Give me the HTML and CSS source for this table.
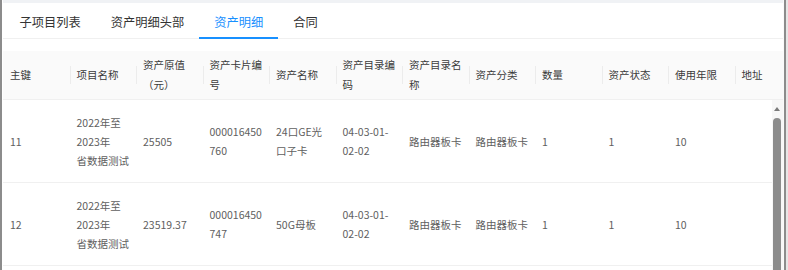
FILE: index.html
```
<!DOCTYPE html>
<html lang="zh-CN">
<head>
<meta charset="utf-8">
<link rel="stylesheet" href="styles.css">
</head>
<body>
<div class="frame">
  <div class="edge-left"></div>
  <div class="main">
    <div class="strip"></div>
    <div class="tabs">
      <div class="tab">子项目列表</div>
      <div class="tab">资产明细头部</div>
      <div class="tab active">资产明细</div>
      <div class="tab">合同</div>
    </div>
    <div class="grid">
      <div class="thead">
        <table>
          <colgroup>
            <col><col><col><col><col><col><col><col><col><col><col><col>
          </colgroup>
          <tr>
            <th>主键</th>
            <th>项目名称</th>
            <th>资产原值（元）</th>
            <th>资产卡片编号</th>
            <th>资产名称</th>
            <th>资产目录编码</th>
            <th>资产目录名称</th>
            <th>资产分类</th>
            <th>数量</th>
            <th>资产状态</th>
            <th>使用年限</th>
            <th>地址</th>
          </tr>
        </table>
      </div>
      <div class="tbody-wrap">
        <div class="tbody-clip">
          <table>
            <colgroup>
              <col><col><col><col><col><col><col><col><col><col><col><col>
            </colgroup>
            <tr>
              <td>11</td>
              <td>2022年至<br>2023年<br>省数据测试</td>
              <td>25505</td>
              <td class="brk">000016450760</td>
              <td>24口GE光口子卡</td>
              <td>04-03-01-02-02</td>
              <td>路由器板卡</td>
              <td>路由器板卡</td>
              <td>1</td>
              <td>1</td>
              <td>10</td>
              <td></td>
            </tr>
            <tr>
              <td>12</td>
              <td>2022年至<br>2023年<br>省数据测试</td>
              <td>23519.37</td>
              <td class="brk">000016450747</td>
              <td>50G母板</td>
              <td>04-03-01-02-02</td>
              <td>路由器板卡</td>
              <td>路由器板卡</td>
              <td>1</td>
              <td>1</td>
              <td>10</td>
              <td></td>
            </tr>
          </table>
        </div>
        <div class="scrollbar">
          <div class="sb-arrow"></div>
          <div class="sb-thumb"></div>
        </div>
      </div>
    </div>
  </div>
  <div class="edge-gap"></div>
  <div class="edge-right"></div>
  <div class="edge-far"></div>
</div>
</body>
</html>
```
FILE: styles.css
```
html, body {
  margin: 0;
  padding: 0;
  background: #fff;
}
body {
  width: 788px;
  height: 270px;
  overflow: hidden;
  font-family: "Noto Sans CJK SC", "Noto Sans", sans-serif;
}
.frame {
  display: flex;
  height: 270px;
}
.edge-left {
  width: 2px;
  background: #8c8c8c;
  margin-right: 1px;
  flex: none;
}
.main {
  width: 780px;
  flex: none;
  display: flex;
  flex-direction: column;
  overflow: hidden;
}
.edge-gap {
  width: 1px;
  background: #fafafa;
  flex: none;
}
.edge-right {
  width: 2px;
  background: #8c8c8c;
  flex: none;
}
.edge-far {
  width: 2px;
  background: #e6e6e6;
  flex: none;
}
.strip {
  height: 3px;
  background: #f0f2f5;
  flex: none;
}
.tabs {
  display: flex;
  height: 35px;
  border-bottom: 1px solid #f0f0f0;
  padding-left: 1.5px;
  flex: none;
}
.tab {
  position: relative;
  padding: 10px 15px 6px;
  font-size: 12.25px;
  line-height: 19px;
  color: #333;
  white-space: nowrap;
}
.tab.active {
  color: #1890ff;
}
.tab.active::after {
  content: "";
  position: absolute;
  left: 0;
  right: 0;
  bottom: -1px;
  height: 2px;
  background: #1890ff;
}
.grid {
  margin-top: 12px;
  flex: 1;
  display: flex;
  flex-direction: column;
  min-height: 0;
}
.thead {
  overflow: hidden;
  flex: none;
}
table {
  width: 798px;
  table-layout: fixed;
  border-collapse: collapse;
  border-spacing: 0;
  font-size: 10.5px;
}
col {
  width: 66.5px;
}
th {
  padding: 4px 5px 4px 7px;
  line-height: 20px;
  height: 40px;
  font-weight: normal;
  text-align: left;
  vertical-align: middle;
  color: #3a3a3a;
  background: #fafafa;
  border-bottom: 1px solid #f0f0f0;
  position: relative;
  box-sizing: content-box;
}
th + th::before {
  content: "";
  position: absolute;
  left: 0;
  top: 50%;
  width: 1px;
  height: 18px;
  margin-top: -9px;
  background: #ececec;
}
.tbody-wrap {
  flex: 1;
  display: flex;
  min-height: 0;
}
.tbody-clip {
  flex: 1;
  overflow: hidden;
}
td {
  padding: 12.5px 5px 12.5px 7px;
  line-height: 19px;
  color: #606060;
  vertical-align: middle;
  border-bottom: 1px solid #f0f0f0;
}
td.brk {
  word-break: break-all;
}
.scrollbar {
  width: 11px;
  flex: none;
  display: flex;
  flex-direction: column;
  align-items: center;
  background: #f7f7f7;
  padding-right: 1px;
  box-sizing: border-box;
}
.sb-arrow {
  width: 0;
  height: 0;
  border-left: 3.5px solid transparent;
  border-right: 3.5px solid transparent;
  border-bottom: 4px solid #7a7a7a;
  margin-top: 7px;
}
.sb-thumb {
  width: 8px;
  flex: 1;
  margin-top: 7px;
  background: #8c8c8c;
  border-radius: 4px 4px 0 0;
}
```
